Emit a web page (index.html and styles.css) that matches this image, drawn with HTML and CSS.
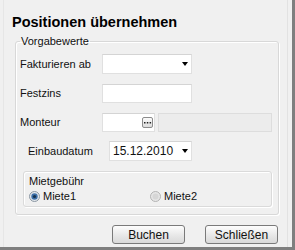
FILE: index.html
```html
<!DOCTYPE html>
<html lang="de">
<head>
  <meta charset="UTF-8">
  <title>Positionen übernehmen</title>
  <link rel="stylesheet" href="styles.css">
</head>
<body>
  <div class="window">
    <div class="dialog">
      <!-- Title -->
      <h1 class="title">Positionen übernehmen</h1>

      <!-- Default values group -->
      <fieldset class="group">
        <legend>Vorgabewerte</legend>

        <div class="row first">
          <label class="label">Fakturieren ab</label>
          <div class="select wide"><span class="value"></span><span class="arrow"></span></div>
        </div>

        <div class="row">
          <label class="label">Festzins</label>
          <div class="input wide"></div>
        </div>

        <div class="row">
          <label class="label">Monteur</label>
          <div class="input lookup">
            <span class="dots">
              <svg width="9" height="9" viewBox="0 0 9 9"><rect x="1" y="4" width="1.5" height="1.5" fill="#222"/><rect x="3.8" y="4" width="1.5" height="1.5" fill="#222"/><rect x="6.6" y="4" width="1.5" height="1.5" fill="#222"/></svg>
            </span>
          </div>
          <div class="input disabled"></div>
        </div>

        <div class="row">
          <label class="label indent">Einbaudatum</label>
          <div class="select date"><span class="value">15.12.2010</span><span class="arrow"></span></div>
        </div>

        <!-- Rent fee -->
        <div class="subgroup">
          <div class="subgroup-title">Mietgebühr</div>
          <div class="radios">
            <label class="radio">
              <svg width="11" height="11" viewBox="0 0 11 11"><circle cx="5.5" cy="5.5" r="5" fill="#e4e8ec" stroke="#8a96a2"/><circle cx="5.5" cy="5.5" r="3.2" fill="#3d6fa8"/><circle cx="5.5" cy="5.5" r="1.6" fill="#15324f"/></svg>
              Miete1
            </label>
            <label class="radio second">
              <svg width="11" height="11" viewBox="0 0 11 11"><circle cx="5.5" cy="5.5" r="5" fill="#e6e6e6" stroke="#b3b3b3"/><circle cx="5.5" cy="5.5" r="3" fill="#d6d6d6"/></svg>
              Miete2
            </label>
          </div>
        </div>
      </fieldset>

      <!-- Buttons -->
      <div class="actions">
        <button class="btn">Buchen</button>
        <button class="btn">Schließen</button>
      </div>
    </div>
  </div>
</body>
</html>
```

FILE: styles.css
```css
/* General */
body {
  margin: 0;
  font-family: 'Liberation Sans', Arial, sans-serif;
  font-size: 11px;
  color: #111111;
  background: #f0f0f0;
}

.window {
  width: 295px;
  height: 250px;
  box-sizing: border-box;
  border-right: 3px solid #7f7f7f;
  border-bottom: 3px solid #7f7f7f;
  background: #f0f0f0;
}

.dialog {
  margin-left: 3px;
  width: 285px;
  height: 247px;
  box-sizing: border-box;
  border-left: 1px solid #e6e6e6;
  border-right: 1px solid #e2e2e2;
}

/* Title */
.title {
  margin: 0;
  padding: 12px 0 0 8px;
  font-size: 14.5px;
  line-height: 20px;
  font-weight: bold;
  color: #000000;
}

/* Group boxes */
.group {
  margin: 3px 0 0 11px;
  width: 264px;
  box-sizing: border-box;
  padding: 0 0 7px 0;
  border: 1px solid #d8d8d8;
  border-radius: 3px;
  box-shadow: inset 1px 1px 0 #ffffff, 1px 1px 0 #ffffff;
}

.group legend {
  margin-left: 4px;
  padding: 0 1px;
  line-height: 13px;
}

.row {
  display: flex;
  align-items: center;
  height: 20px;
  margin-top: 9px;
}

.row.first {
  margin-top: 6px;
}

.label {
  width: 82px;
  padding-left: 4px;
  flex-shrink: 0;
}

.label.indent {
  width: 81px;
  padding-left: 12px;
}

/* Inputs */
.input,
.select {
  height: 19px;
  box-sizing: border-box;
  background: #ffffff;
  border: 1px solid #e0e0e0;
  border-top-color: #d4d4d4;
}

.select {
  height: 20px;
  display: flex;
  align-items: center;
  justify-content: space-between;
  padding: 0 3px 0 3px;
}

.wide {
  width: 90px;
}

.date {
  width: 83px;
  font-size: 12px;
}

.arrow {
  width: 0;
  height: 0;
  border-left: 3.5px solid transparent;
  border-right: 3.5px solid transparent;
  border-top: 4px solid #000000;
}

.lookup {
  width: 53px;
  display: flex;
  align-items: center;
  justify-content: flex-end;
  padding-right: 1px;
}

.dots {
  width: 11px;
  height: 11px;
  box-sizing: border-box;
  border: 1px solid #8c8c8c;
  border-radius: 2px;
  background: linear-gradient(#fbfbfb, #dcdcdc);
  display: flex;
  align-items: center;
  justify-content: center;
}

.dots svg {
  display: block;
}

.disabled {
  width: 114px;
  margin-left: 3px;
  background: #ececec;
  border-color: #dddddd;
}

/* Mietgebühr */
.subgroup {
  margin: 10px 0 0 7px;
  width: 249px;
  height: 36px;
  box-sizing: border-box;
  border: 1px solid #dadada;
  border-radius: 3px;
  box-shadow: inset 1px 1px 0 #ffffff, 1px 1px 0 #ffffff;
  padding: 3px 0 0 5px;
}

.subgroup-title {
  line-height: 13px;
}

.radios {
  display: flex;
  margin-top: 2px;
}

.radio {
  display: flex;
  align-items: center;
  gap: 3px;
  line-height: 13px;
  width: 122px;
}

.radio svg {
  display: block;
}

/* Buttons */
.actions {
  display: flex;
  justify-content: flex-end;
  gap: 20px;
  margin-top: 10px;
  padding-right: 9px;
}

.btn {
  width: 73px;
  height: 19px;
  padding: 0;
  font-family: 'Liberation Sans', Arial, sans-serif;
  font-size: 12px;
  color: #111111;
  border: 1px solid #7a7a7a;
  border-radius: 3px;
  background: linear-gradient(#fdfdfd, #e6e6e6 60%, #d9d9d9);
}
```
